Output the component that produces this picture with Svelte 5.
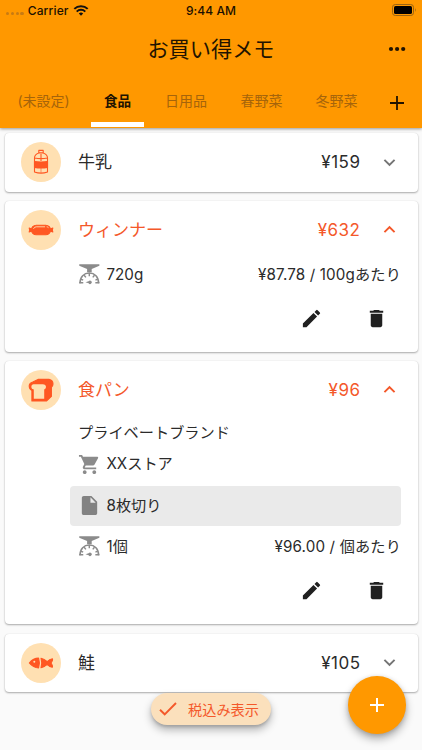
<script>
  const tabs = [
    { label: '(未設定)', width: 87 },
    { label: '食品', width: 61 },
    { label: '日用品', width: 76 },
    { label: '春野菜', width: 75 },
    { label: '冬野菜', width: 75 }
  ];
  const items = [
    { icon: 'milk', name: '牛乳', price: '¥159' },
    { icon: 'sausage', name: 'ウィンナー', price: '¥632', open: true, amount: '720g', unit: '¥87.78 / 100gあたり' },
    { icon: 'bread', name: '食パン', price: '¥96', open: true, brand: 'プライベートブランド', store: 'XXストア', note: '8枚切り', amount: '1個', unit: '¥96.00 / 個あたり' },
    { icon: 'fish', name: '鮭', price: '¥105' }
  ];
</script>

{#snippet foodIcon(kind)}
  <svg class="food" viewBox="0 0 26 26" fill="none" stroke="#ff5722" stroke-width="1.1" stroke-linejoin="round">
    {#if kind === 'milk'}
      <path d="M10.8 1.4h4.4v2.5q4.3 1.6 4.3 5v14q-6.5 2.4-13 0v-14q0-3.4 4.3-5zM10.5 3.9h5M6.6 9q6.4 1.2 12.8 0M13 5v7" />
      <path d="M6.5 12.6q6.5 1 13 0v5.8q-6.5 1-13 0z" fill="#ff5722" />
      <path d="M13 19v4.8" stroke-width=".6" />
    {:else if kind === 'sausage'}
      <path d="M1.2 11l2.5 1v2l-2.5 1 .5-2zM24.8 11l-2.5 1v2l2.5 1-.5-2z" fill="#ff5722" />
      <rect x="3.4" y="8.2" width="19.2" height="9.6" rx="4.8" fill="#ff5722" />
      <path d="M5.5 11.8q.8-2 2.8-2h8.8M18.7 9.8q1.2.1 1.8.9" stroke="#ffe0b2" stroke-width=".9" />
    {:else if kind === 'bread'}
      <path d="M10 2.4h11q4 .8 4 4.6 0 2.1-1.6 3.2v9.2l-5 4.6H3.9V13.4Q1.2 12 1.2 9 1.2 6 4.8 5z" fill="#ff5722" />
      <path d="M5.4 7.2h9.2q3.4.3 3.4 2.8 0 1.8-1.8 2.5v9.2H5.8v-9.2q-2.5-.6-2.5-2.6 0-2.5 2.1-2.7z" fill="#ffe0b2" stroke="none" />
    {:else}
      <path d="M1.3 13q4-4.9 9.3-4.9 1.6 4.9 0 9.8Q5.3 17.9 1.3 13z" fill="#ff5722" />
      <circle cx="6.3" cy="11.8" r="1" fill="#ffe0b2" stroke="none" />
      <path d="M13 8.2q3.2.7 6.2 3.4 2.5-2.7 5.2-2.9.7 1.2-1.4 4.3 2 3 1.3 4.3-2.6-.2-5.1-2.9-3 2.7-6.2 3.4 1.5-4.8 0-9.6z" fill="#ff5722" />
    {/if}
  </svg>
{/snippet}

{#snippet scaleIcon()}
  <svg class="lead" viewBox="0 0 24 24" fill="#8b8b8b">
    <path d="M1.3 1.2h21v1.7L14.3 6.3v3.4H9.5V6.3L1.3 2.9z" />
    <path d="M2.1 21C2.1 14.4 6.2 10.5 11.8 10.5s9.7 3.9 9.7 10.5" fill="none" stroke="#8b8b8b" stroke-width="1.6" />
    <path d="M11.8 10.5v3.2M6.4 12.8l1.8 2.2M17.2 12.8l-1.8 2.2M3.1 16.8l2.3 1M20.5 16.8l-2.3 1M1.3 20.7h4.2M18.1 20.7h4.2" stroke="#8b8b8b" stroke-width="1.5" />
    <path d="M7.8 20l3.3-.9a1.8 1.8 0 1 1 0 2z" />
  </svg>
{/snippet}

<main>
  <header>
    <div class="status">
      <div class="carrier">
        <span class="dots"><i></i><i></i><i></i><i></i></span>
        <span>Carrier</span>
        <svg width="16" height="11" viewBox="0 0 15 11"><path d="M7.5 10.8 5.3 8.5a3.2 3.2 0 0 1 4.4 0z" fill="#111" /><path d="M.8 3.9a9.6 9.6 0 0 1 13.4 0M3.2 6.6a6.2 6.2 0 0 1 8.6 0" fill="none" stroke="#111" stroke-width="2" /></svg>
      </div>
      <span class="time">9:44 AM</span>
      <svg class="battery" width="25" height="12" viewBox="0 0 25 12"><rect x=".5" y=".5" width="21" height="11" rx="2.8" fill="none" stroke="#9a6412" /><rect x="2" y="2" width="18" height="8" rx="1.6" fill="#000" /><path d="M23 4q1.6 2 0 4z" fill="#9a6412" /></svg>
    </div>
    <div class="titlebar">
      <h1>お買い得メモ</h1>
      <svg class="more" viewBox="0 0 18 6"><circle cx="3" cy="3" r="2.1" /><circle cx="9.1" cy="3" r="2.1" /><circle cx="15.2" cy="3" r="2.1" /></svg>
    </div>
    <nav>
      {#each tabs as tab, i}
        <button class:active={i === 1} style:width={`${tab.width}px`}><span>{tab.label}</span></button>
      {/each}
      <button class="add" aria-label="追加"><svg width="16" height="16" viewBox="0 0 16 16"><path d="M8 1v14M1 8h14" stroke="#211300" stroke-width="1.8" /></svg></button>
    </nav>
  </header>

  <section>
    {#each items as item}
      <article class:open={item.open}>
        <div class="summary">
          <span class="avatar">{@render foodIcon(item.icon)}</span>
          <span class="name">{item.name}</span>
          <span class="price">{item.price}</span>
          <svg class="chevron" viewBox="0 0 24 24"><path d={item.open ? 'M12 8l-6 6 1.41 1.41L12 10.83l4.59 4.58L18 14z' : 'M16.59 8.59L12 13.17 7.41 8.59 6 10l6 6 6-6z'} /></svg>
        </div>
        {#if item.open}
          <div class="details">
            {#if item.brand}
              <div class="brand">{item.brand}</div>
              <div class="row store">
                <svg class="lead" viewBox="0 0 24 24" fill="#8b8b8b"><path d="M7 18c-1.1 0-1.99.9-1.99 2S5.9 22 7 22s2-.9 2-2-.9-2-2-2zM1 2v2h2l3.6 7.59-1.35 2.45c-.16.28-.25.61-.25.96 0 1.1.9 2 2 2h12v-2H7.42c-.14 0-.25-.11-.25-.25l.03-.12.9-1.63h7.45c.75 0 1.41-.41 1.75-1.03l3.58-6.49A1 1 0 0 0 20 4H5.21l-.94-2zm16 16c-1.1 0-1.99.9-1.99 2s.89 2 1.99 2 2-.9 2-2-.9-2-2-2z" /></svg>
                <span>{item.store}</span>
              </div>
              <div class="row note">
                <svg class="lead" viewBox="0 0 24 24" fill="#828282"><path d="M6 2c-1.1 0-1.99.9-1.99 2L4 20c0 1.1.89 2 1.99 2H18c1.1 0 2-.9 2-2V8l-6-6zm7 7V3.5L18.5 9z" /></svg>
                <span>{item.note}</span>
              </div>
            {/if}
            <div class="row amount">
              {@render scaleIcon()}
              <span>{item.amount}</span>
              <span class="unit">{item.unit}</span>
            </div>
            <div class="actions">
              <svg viewBox="0 0 24 24"><path d="M3 17.25V21h3.75L17.81 9.94l-3.75-3.75zM20.71 7.04a1 1 0 0 0 0-1.41l-2.34-2.34a1 1 0 0 0-1.41 0l-1.83 1.83 3.75 3.75z" /></svg>
              <svg viewBox="0 0 24 24"><path d="M6 19c0 1.1.9 2 2 2h8c1.1 0 2-.9 2-2V7H6zM19 4h-3.5l-1-1h-5l-1 1H5v2h14z" /></svg>
            </div>
          </div>
        {/if}
      </article>
    {/each}
  </section>

  <div class="chip"><svg width="18" height="14" viewBox="0 0 18 14"><path d="M1 7.8 5.7 12.3 17 1" fill="none" stroke="#f4582a" stroke-width="1.9" /></svg><span>税込み表示</span></div>
  <button class="fab" aria-label="商品を追加"><svg width="16" height="16" viewBox="0 0 16 16"><path d="M8 1v14M1 8h14" stroke="#fff" stroke-width="2" /></svg></button>
</main>

<style>
  :global(body) { margin: 0; }
  * { box-sizing: border-box; }
  svg { display: block; flex: none; }
  button { padding: 0; border: 0; background: none; font: inherit; }
  main { position: relative; width: 422px; height: 750px; overflow: hidden; background: #fafafa; color: #2b2b2b; font-family: Inter, "Noto Sans CJK JP", sans-serif; font-weight: 400; white-space: nowrap; }
  header { position: relative; z-index: 1; height: 128px; background: #ff9800; box-shadow: 0 1px 3px rgba(0, 0, 0, .4); color: #211300; }
  .status { display: grid; grid-template-columns: 1fr auto 1fr; height: 20px; padding: 0 6px; align-items: center; font-size: 12px; font-weight: 500; color: #1b1000; }
  .carrier { display: flex; align-items: center; gap: 4px; letter-spacing: .15px; }
  .dots { display: flex; gap: 1.5px; padding-top: 7px; }
  .dots i { width: 3.3px; height: 3.3px; border-radius: 50%; background: #c87b12; }
  .time { letter-spacing: .05px; }
  .battery { justify-self: end; margin-right: -1px; }
  .titlebar { display: grid; grid-template-columns: 1fr auto 1fr; height: 57px; padding-top: 1px; align-items: center; }
  h1 { grid-column: 2; margin: 0; font-size: 21.2px; line-height: 28px; font-weight: 400; }
  .more { justify-self: end; width: 18px; height: 6px; margin-right: 16px; fill: #211300; }
  nav { display: flex; height: 51px; }
  nav button { position: relative; height: 51px; padding-bottom: 3px; flex: none; font-size: 14px; line-height: 20px; color: #a5640b; }
  nav button.active { color: #211300; font-size: 13.6px; font-weight: 700; }
  nav button.active::after { content: ""; position: absolute; left: 4px; right: 4px; bottom: 1.5px; height: 4.5px; background: #fff; }
  nav .add { display: flex; flex: 1; align-items: center; justify-content: center; padding: 1px 2px 0 0; }
  section { display: flex; flex-direction: column; gap: 9.7px; padding: 5px 4.5px 0 5px; }
  article { height: 58.6px; background: #fff; border-radius: 4px; box-shadow: 0 1px 2px rgba(0, 0, 0, .32), 0 0 1px rgba(0, 0, 0, .12); }
  article.open { height: auto; padding-bottom: 3.5px; }
  .summary { display: flex; height: 58px; align-items: center; padding: 0 17px 0 16px; font-size: 17px; line-height: 24px; }
  .open .summary { height: 57px; }
  .avatar { display: flex; width: 40px; height: 40px; flex: none; align-items: center; justify-content: center; border-radius: 50%; background: #ffe0b2; }
  .food { width: 26px; height: 26px; }
  .name { margin-left: 17px; }
  .price { margin-left: auto; font-size: 17px; letter-spacing: .5px; }
  .chevron { width: 23px; height: 23px; margin-left: 17px; fill: #757575; }
  .open .summary { color: #f4582a; }
  .open .chevron { fill: #f4582a; }
  .details { padding: 1px 16.5px 0 65px; font-size: 15.2px; }
  .brand { height: 28.5px; padding-left: 8px; line-height: 28.5px; }
  .row { display: flex; height: 31px; align-items: center; padding-left: 8px; line-height: 22px; }
  .row .lead { width: 23px; height: 23px; margin-right: 5.5px; }
  .row.store { height: 33px; }
  .row.note { height: 40px; margin: 5px 0 5.5px; background: #eaeaea; border-radius: 4px; }
  .unit { margin-left: auto; letter-spacing: .15px; }
  .actions { display: flex; height: 58px; align-items: center; justify-content: flex-end; gap: 42px; padding: 0 13px 1px 0; }
  .actions svg { width: 23px; height: 23px; fill: #202020; }
  .chip { position: absolute; left: 151px; top: 693px; display: flex; width: 120px; height: 32px; padding: 0 0 1px 8px; align-items: center; gap: 11px; border-radius: 16px; background: #fbe0bc; box-shadow: 0 5px 9px rgba(0, 0, 0, .28), 0 2px 3px rgba(0, 0, 0, .15); color: #f4582a; font-size: 14.2px; }
  .fab { position: absolute; left: 348px; top: 676px; display: flex; width: 57.5px; height: 57.5px; align-items: center; justify-content: center; border-radius: 50%; background: #ff9800; box-shadow: 0 5px 8px rgba(0, 0, 0, .3), 0 1px 4px rgba(0, 0, 0, .15); }
</style>
